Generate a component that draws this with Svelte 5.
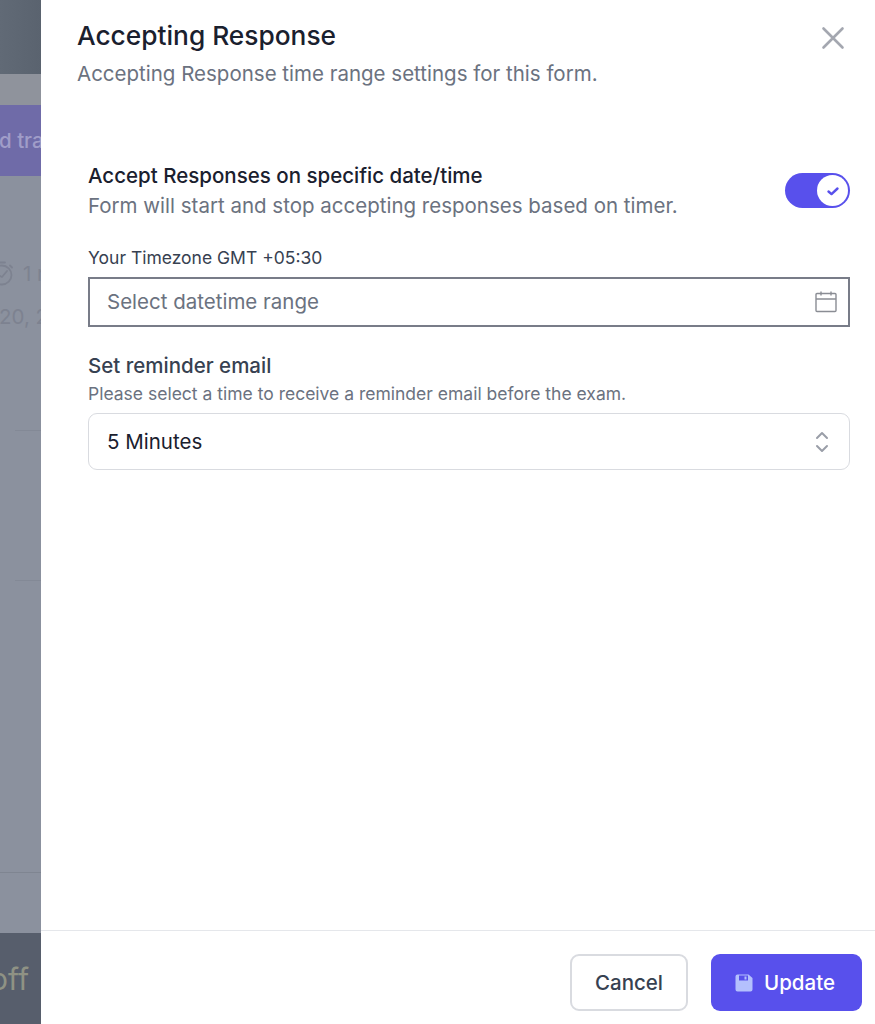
<script lang="ts">
  let accepting = $state(true);
  let reminder = $state('5 Minutes');
</script>

<div class="page">
  <aside class="backdrop" aria-hidden="true">
    <div class="bg-header"></div>
    <div class="bg-gap"></div>
    <div class="bg-banner"><span>d tra</span></div>
    <div class="bg-main">
      <div class="bg-meta">
        <svg width="22" height="26" viewBox="0 0 22 26" fill="none" stroke="currentColor" stroke-width="1.8" stroke-linecap="round" stroke-linejoin="round">
          <circle cx="5" cy="15" r="9.5" />
          <path d="M1 15l4 2 5-6M2 2.500h6M13 5.500l2 2" />
        </svg>
        <span>1 r</span>
      </div>
      <div class="bg-date"><span>20, 2</span></div>
      <div class="bg-rule first"></div>
      <div class="bg-rule second"></div>
    </div>
    <div class="bg-row"></div>
    <div class="bg-footer"><span>off</span></div>
  </aside>

  <section class="panel">
    <header class="panel-head">
      <div>
        <h1>Accepting Response</h1>
        <p>Accepting Response time range settings for this form.</p>
      </div>
      <button class="close" type="button" aria-label="Close">
        <svg width="24" height="24" viewBox="0 0 24 24" fill="none" stroke="#a4a7b0" stroke-width="2.6" stroke-linecap="round">
          <path d="M2.500 2.500l19 19M21.500 2.500l-19 19" />
        </svg>
      </button>
    </header>

    <div class="panel-body">
      <div class="toggle-row">
        <div>
          <h2>Accept Responses on specific date/time</h2>
          <p>Form will start and stop accepting responses based on timer.</p>
        </div>
        <button
          class="toggle"
          type="button"
          aria-label="Toggle accepting responses"
          class:on={accepting}
          onclick={() => (accepting = !accepting)}
        >
          <span class="knob">
            <svg width="14" height="14" viewBox="0 0 14 14" fill="none" stroke="#5850ec" stroke-width="2.400" stroke-linecap="round" stroke-linejoin="round">
              <path d="M2.500 7.500l3 2.600 6-5.600" />
            </svg>
          </span>
        </button>
      </div>

      <label class="tz" for="range">Your Timezone GMT +05:30</label>
      <div class="range">
        <input id="range" type="text" placeholder="Select datetime range" />
        <svg width="22" height="22" viewBox="0 0 22 22" fill="none" stroke="#8a8d94" stroke-width="1.400">
          <rect x="1" y="2.500" width="20" height="18" rx="1" />
          <path d="M1 8h20M6 .5v4M16 .5v4" />
        </svg>
      </div>

      <h3>Set reminder email</h3>
      <p class="hint">Please select a time to receive a reminder email before the exam.</p>
      <div class="select">
        <span>{reminder}</span>
        <svg width="14" height="24" viewBox="0 0 14 24" fill="none" stroke="#9a9ea8" stroke-width="2" stroke-linecap="round" stroke-linejoin="round">
          <path d="M2 8l5-5 5 5M2 16l5 5 5-5" />
        </svg>
      </div>
    </div>

    <footer class="panel-foot">
      <button class="btn cancel" type="button">Cancel</button>
      <button class="btn update" type="button">
        <svg width="18" height="18" viewBox="0 0 18 18">
          <path fill="#b4c0fd" d="M2.500 .5h11L17.500 4v11.500a2 2 0 0 1-2 2h-13a2 2 0 0 1-2-2v-13a2 2 0 0 1 2-2z" />
          <rect x="4" y="1.500" width="9" height="5" fill="#5850ec" />
          <rect x="9.500" y="2.500" width="2" height="3" fill="#b4c0fd" />
        </svg>
        Update
      </button>
    </footer>
  </section>
</div>

<style>
  :global(body) {
    background: #fff;
  }

  .page {
    display: flex;
    height: 1024px;
    overflow: hidden;
    font-family: Inter, 'Liberation Sans', sans-serif;
    color: #1a202e;
  }

  .backdrop {
    width: 41px;
    flex: none;
    display: flex;
    flex-direction: column;
    overflow: hidden;
    background: #8b919e;
    color: #7d8290;
    white-space: nowrap;
  }

  .bg-header {
    height: 74px;
    background: linear-gradient(90deg, #616a76, #5a636f);
  }

  .bg-gap {
    height: 31px;
    background: #8f939c;
  }

  .bg-banner {
    height: 71px;
    background: #6f6ba8;
    display: flex;
    align-items: center;
    overflow: hidden;
    font-size: 20.5px;
    font-weight: 500;
    color: #a09dc8;
  }

  .bg-banner span {
    flex: none;
    margin-left: -1px;
  }

  .bg-main {
    flex: 1;
    padding-top: 84px;
    display: flex;
    flex-direction: column;
    font-size: 20.5px;
  }

  .bg-meta {
    display: flex;
    align-items: center;
    gap: 7px;
    height: 26px;
    margin-right: -30px;
  }

  .bg-meta svg {
    flex: none;
    margin-left: -3px;
    margin-right: -3px;
  }

  .bg-date {
    margin-top: 18px;
    margin-left: -1px;
  }

  .bg-rule {
    height: 1px;
    margin-left: 15px;
    background: #838996;
  }

  .bg-rule.first {
    margin-top: 101px;
  }

  .bg-rule.second {
    margin-top: 149px;
  }

  .bg-row {
    height: 60px;
    flex: none;
    border-top: 1px solid #7f8591;
  }

  .bg-footer {
    height: 91px;
    flex: none;
    background: #575e6c;
    color: #8f9284;
    font-size: 30px;
    line-height: 92px;
    overflow: hidden;
    display: flex;
    justify-content: flex-end;
  }

  .bg-footer span {
    margin-right: 12px;
    flex: none;
  }

  .panel {
    flex: 1;
    min-width: 0;
    display: flex;
    flex-direction: column;
    background: #fff;
  }

  .panel-head {
    display: flex;
    justify-content: space-between;
    align-items: flex-start;
    padding: 21px 30px 0 36px;
  }

  h1 {
    margin: 0;
    font-size: 26.3px;
    line-height: 30px;
    font-weight: 500;
    color: #1a202e;
  }

  .panel-head p {
    margin: 8px 0 0;
    font-size: 20.5px;
    line-height: 30px;
    color: #6b7280;
  }

  .close {
    border: 0;
    padding: 0;
    background: none;
    margin-top: 5px;
    display: flex;
    cursor: pointer;
  }

  .panel-body {
    flex: 1;
    padding: 72px 25px 0 47px;
  }

  .toggle-row {
    display: flex;
    justify-content: space-between;
    align-items: flex-start;
  }

  h2 {
    margin: 0;
    font-size: 20.5px;
    line-height: 30px;
    font-weight: 500;
  }

  .toggle-row p {
    margin: 0;
    font-size: 20.5px;
    line-height: 30px;
    color: #6b7280;
  }

  .toggle {
    width: 65px;
    height: 35px;
    margin-top: 12px;
    border: 0;
    border-radius: 18px;
    padding: 2px;
    background: #5850ec;
    display: flex;
    justify-content: flex-end;
    cursor: pointer;
  }

  .toggle:not(.on) {
    justify-content: flex-start;
    background: #d1d5db;
  }

  .knob {
    width: 31px;
    height: 31px;
    border-radius: 50%;
    background: #fff;
    display: flex;
    align-items: center;
    justify-content: center;
  }

  .tz {
    display: block;
    margin-top: 24px;
    font-size: 17.5px;
    line-height: 26px;
    color: #374151;
  }

  .range {
    margin-top: 6px;
    height: 50px;
    box-sizing: border-box;
    border: 2px solid #787c88;
    display: flex;
    align-items: center;
    padding: 0 11px 2px 17px;
  }

  .range input {
    flex: 1;
    min-width: 0;
    border: 0;
    outline: 0;
    padding: 0;
    font: inherit;
    font-size: 20.5px;
    color: #1a202e;
  }

  .range svg {
    margin-top: 2px;
  }

  .range input::placeholder {
    color: #6b7280;
    opacity: 1;
  }

  h3 {
    margin: 24px 0 0;
    font-size: 20.5px;
    line-height: 30px;
    font-weight: 500;
    color: #374151;
  }

  .hint {
    margin: 0;
    font-size: 17.5px;
    line-height: 26px;
    color: #6b7280;
  }

  .select {
    margin-top: 6px;
    height: 57px;
    box-sizing: border-box;
    border: 1.5px solid #d9dbe0;
    border-radius: 9px;
    display: flex;
    align-items: center;
    justify-content: space-between;
    padding: 0 20px 0 18px;
    font-size: 20.5px;
    color: #1a202e;
  }

  .panel-foot {
    height: 94px;
    box-sizing: border-box;
    border-top: 1px solid #e5e7eb;
    display: flex;
    align-items: flex-start;
    justify-content: flex-end;
    gap: 23px;
    padding: 23px 13px 0 0;
  }

  .btn {
    height: 57px;
    border-radius: 9px;
    font: inherit;
    font-size: 20.5px;
    font-weight: 500;
    display: flex;
    align-items: center;
    justify-content: center;
    cursor: pointer;
  }

  .cancel {
    width: 118px;
    box-sizing: border-box;
    background: #fff;
    border: 2px solid #d9dbe0;
    color: #374151;
  }

  .update {
    width: 151px;
    box-sizing: border-box;
    padding: 0 3px 0 0;
    gap: 11px;
    border: 0;
    background: #5850ec;
    color: #fff;
  }
</style>
